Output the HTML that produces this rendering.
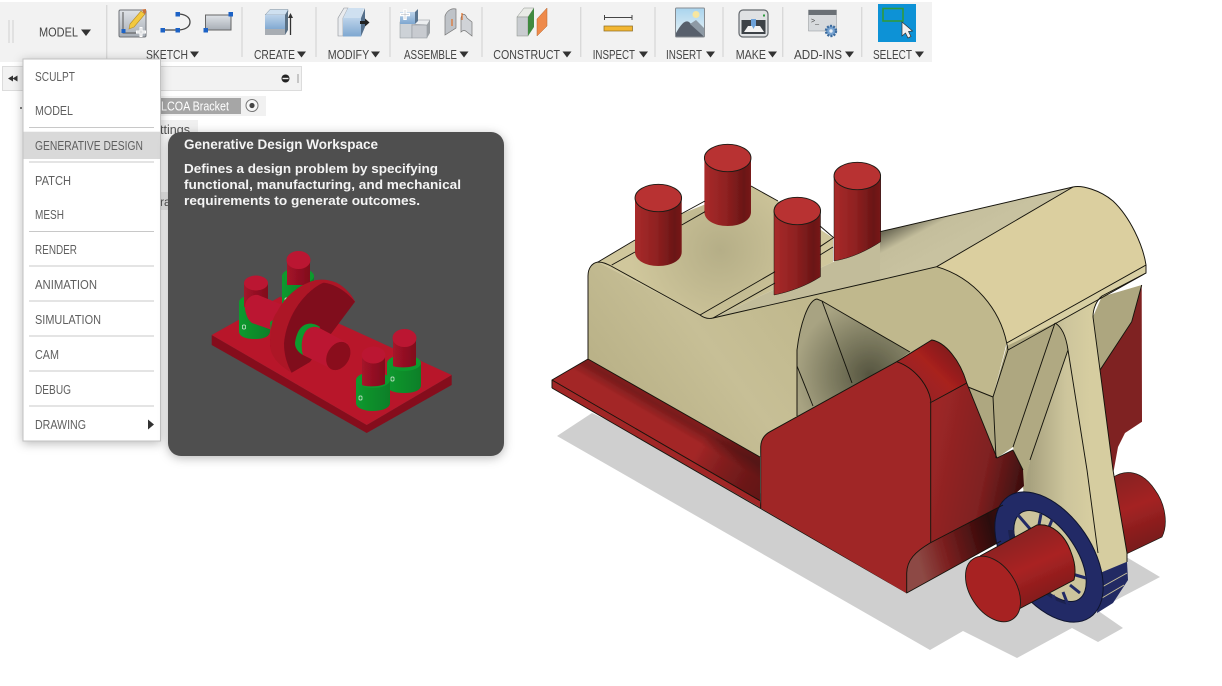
<!DOCTYPE html>
<html lang="en"><head><meta charset="utf-8"><title>Generative Design Workspace</title>
<style>
html,body{margin:0;padding:0;background:#fff;width:1222px;height:686px;overflow:hidden}
svg{display:block;font-family:"Liberation Sans",sans-serif}
.lb{font-size:13px;fill:#444}
.mi{font-size:13px;fill:#5f5f5f}
.e{fill:none;stroke:#14120c;stroke-width:.95}
</style></head><body>
<svg width="1222" height="686" viewBox="0 0 1222 686" xmlns="http://www.w3.org/2000/svg">
<defs>
<filter id="soft" x="-2%" y="-2%" width="104%" height="104%"><feGaussianBlur stdDeviation=".35"/></filter>
<filter id="sh" x="-20%" y="-10%" width="140%" height="120%"><feDropShadow dx="0" dy="2" stdDeviation="5" flood-color="#000" flood-opacity=".28"/></filter>
<linearGradient id="cyl" x1="0" x2="1" y1="0" y2="0"><stop offset="0" stop-color="#a82b2b"/><stop offset=".45" stop-color="#902121"/><stop offset=".85" stop-color="#6a1616"/><stop offset="1" stop-color="#781a1a"/></linearGradient>
<linearGradient id="flange" gradientUnits="userSpaceOnUse" x1="640" y1="431" x2="661" y2="395"><stop offset="0" stop-color="#a32627"/><stop offset=".45" stop-color="#a32626"/><stop offset=".75" stop-color="#781c1c"/><stop offset="1" stop-color="#8c2222"/></linearGradient>
<linearGradient id="flangeEnd" gradientUnits="userSpaceOnUse" x1="700" y1="445" x2="765" y2="482"><stop offset="0" stop-color="#000" stop-opacity="0"/><stop offset="1" stop-color="#3a0a0a" stop-opacity=".6"/></linearGradient>
<linearGradient id="front" gradientUnits="userSpaceOnUse" x1="640" y1="420" x2="800" y2="300"><stop offset="0" stop-color="#bab288"/><stop offset=".5" stop-color="#c7bf96"/><stop offset="1" stop-color="#c0b88d"/></linearGradient>
<linearGradient id="redb" gradientUnits="userSpaceOnUse" x1="930" y1="450" x2="1025" y2="470"><stop offset="0" stop-color="#9c2626"/><stop offset=".6" stop-color="#7f2020"/><stop offset="1" stop-color="#3d0f0f"/></linearGradient>
<linearGradient id="bevel" gradientUnits="userSpaceOnUse" x1="915" y1="550" x2="1005" y2="525"><stop offset="0" stop-color="#8d4a45"/><stop offset=".3" stop-color="#7c2020"/><stop offset=".85" stop-color="#2b0808"/><stop offset="1" stop-color="#3a0d0d"/></linearGradient>
<linearGradient id="topr" gradientUnits="userSpaceOnUse" x1="905" y1="400" x2="955" y2="350"><stop offset="0" stop-color="#8f2323"/><stop offset=".6" stop-color="#a8201f"/><stop offset="1" stop-color="#7f1c1c"/></linearGradient>
<linearGradient id="shaft" gradientUnits="userSpaceOnUse" x1="1035" y1="612" x2="1005" y2="545"><stop offset="0" stop-color="#7a1a1a"/><stop offset=".6" stop-color="#a92222"/><stop offset="1" stop-color="#8f2020"/></linearGradient>
<linearGradient id="rshaft" gradientUnits="userSpaceOnUse" x1="1140" y1="545" x2="1115" y2="480"><stop offset="0" stop-color="#7c1c1c"/><stop offset=".55" stop-color="#a42222"/><stop offset="1" stop-color="#8a2020"/></linearGradient>
<linearGradient id="wedge" gradientUnits="userSpaceOnUse" x1="885" y1="232" x2="905" y2="270"><stop offset="0" stop-color="#6f6c58"/><stop offset=".4" stop-color="#c4be9c"/><stop offset="1" stop-color="#c8c2a0"/></linearGradient>
<linearGradient id="arm" gradientUnits="userSpaceOnUse" x1="1030" y1="500" x2="1090" y2="500"><stop offset="0" stop-color="#a8a27f"/><stop offset=".6" stop-color="#cdc59c"/><stop offset="1" stop-color="#d6cda0"/></linearGradient>
<radialGradient id="rec" gradientUnits="userSpaceOnUse" cx="870" cy="375" r="75"><stop offset="0" stop-color="#55543f"/><stop offset=".5" stop-color="#7d7b60"/><stop offset="1" stop-color="#a8a382"/></radialGradient>
<radialGradient id="topf" gradientUnits="userSpaceOnUse" cx="720" cy="250" r="90"><stop offset="0" stop-color="#b5ae87"/><stop offset="1" stop-color="#d0c79c"/></radialGradient>
<linearGradient id="ws" x1="0" x2="0" y1="0" y2="1"><stop offset="0" stop-color="#dfe3e8"/><stop offset="1" stop-color="#a7adb5"/></linearGradient>
<linearGradient id="bl" x1="0" x2="0" y1="0" y2="1"><stop offset="0" stop-color="#bcd3ea"/><stop offset="1" stop-color="#7ea7d0"/></linearGradient>
<linearGradient id="sky" x1="0" x2="0" y1="0" y2="1"><stop offset="0" stop-color="#a9d4ee"/><stop offset="1" stop-color="#e9f3f6"/></linearGradient>
<linearGradient id="mrd" x1="0" x2="1" y1="0" y2="0"><stop offset="0" stop-color="#a5122a"/><stop offset="1" stop-color="#80101c"/></linearGradient>
<linearGradient id="mgr" x1="0" x2="1" y1="0" y2="0"><stop offset="0" stop-color="#0f9a2e"/><stop offset="1" stop-color="#0c7f28"/></linearGradient>
</defs>
<g filter="url(#soft)">

<!-- Model -->
<polygon fill="#cfcfcf" points="557,436 592,413 900,560 1128,558 1160,577 1097,610 1123,628 1098,642 1072,628 1017,658 963,631 930,650"/>
<!-- rear red -->
<path fill="#7f2222" d="M1141.7,285 L1142,421.7 L1125,433 L1118,447 L1112,480 L1095,360 L1131.7,321.7Z"/>
<path fill="url(#rshaft)" stroke="#1c1a14" stroke-width=".7" d="M1112,478 C1125,469 1142,470 1155,490 C1166,505 1168,525 1162,537 L1122,556Z"/>
<!-- flange -->
<polygon fill="url(#flange)" points="552,380 588,359 760,457 760,501"/>
<polygon fill="url(#flangeEnd)" points="552,380 588,359 760,457 760,501"/>
<polygon fill="#a12526" points="552,380 760,500.7 761,508 552,388"/>
<path class="e" d="M552,380 L760,500.7 M552,388 L552,380 L588,359 M552,388 L907,593"/>
<!-- back wedge & curved top -->
<polygon fill="#c2bc9a" points="713,318 833,262 880,242 885,280"/>
<polygon fill="url(#wedge)" points="880,231.7 1073,187 936.7,266.7 880,280"/>
<path fill="#dbcf9f" d="M1073,187 C1082,185 1100,190 1113,201 C1130,217 1143,245 1146,265 L1006.7,343 C1000,310 975,278 936.7,266.7Z"/>
<path fill="#d8cfa3" d="M1006.7,343 L1146,265 L1146,273 L1008,350Z"/>
<!-- lower right faces -->
<polygon fill="#ada67f" points="1101.7,296.7 1141.7,285 1131.7,321.7 1100,370 1093,316.7"/>
<polygon fill="#aea780" points="968,386.7 993,397 1006.7,346 1055,323 1013,447 997,458"/>
<polygon fill="#b0a982" points="1055,323 1066,330 1068,350 1030,460 1024,492 1013,447"/>
<!-- arm -->
<path fill="url(#arm)" d="M1055,323 L1146,273 L1102,296 C1097,300 1093,308 1093,317 L1113,470 L1127,553 L1127,562 L1100,573 L1023,492 L1030,460 L1068,350 C1066,336 1062,327 1055,323Z"/>
<!-- main front -->
<path fill="url(#front)" d="M588,359 L588,276 C588,268 592,263 598,262 L706,318 L713,318 L880,280 L936.7,266.7 C975,278 1000,310 1006.7,343 L993,397 L968,387 C962,365 948,342 931,340 L897,361 L770,432 C764,435 761,440 761,447 L760,457Z"/>
<!-- top -->
<path fill="url(#topf)" d="M598,262 L681,214 L751,186 L778,201 L833,238 L833,262 L713,318 L706,318Z"/>
<!-- recess -->
<path fill="url(#rec)" d="M797,416 L797,350 C800,325 808,300 817,299 L822,301 L910,352 L897,361 L797,418Z"/>
<!-- red front plate -->
<path fill="url(#topr)" stroke="#1c1a14" stroke-width=".5" d="M896.7,361.7 L931.7,340 C945,342 960,360 966.7,383 L930,403 C927,385 915,368 896.7,361.7Z"/>
<path fill="url(#redb)" d="M930.7,403 L967,383 L997,458 L1013,450 L1023,470 L1024,486 L1003,505 L930.7,543Z"/>
<path fill="#a02728" d="M760.7,508 L760.7,446.7 C761,440 764,435 770,431.7 L896.7,361.7 C915,368 928,385 930.7,400 L930.7,543 L906.7,593.3Z"/>
<path fill="url(#bevel)" d="M906.7,593 L906.7,573 C907,560 915,552 930,543 L1003,505 L1001,541 Z"/>
<!-- wheel tail -->
<polygon fill="#222a63" points="1100,573 1127,561.7 1128,580 1113,603 1097,613"/>
<path stroke="#c9c19a" stroke-width="1" fill="none" d="M1102,587 L1127,573 M1102,598 L1124,585"/>
<!-- wheel -->
<ellipse cx="1049" cy="557" rx="73" ry="43" transform="rotate(56 1049 557)" fill="#212a66" stroke="#10122e" stroke-width="1"/>
<ellipse cx="1050" cy="556" rx="52" ry="26" transform="rotate(56 1050 556)" fill="#ccc49c" stroke="#10122e" stroke-width="1"/>
<path fill="#1a2150" d="M1014,530 C1016,545 1025,570 1045,590 L1070,605 C1040,600 1012,565 1008,530Z"/>
<path stroke="#212a66" stroke-width="3" fill="none" d="M1018,515 L1031,530 M1041,514 L1038,530 M1052,520 L1047,532 M1072,574 L1086,578 M1070,585 L1080,593 M1063,592 L1068,605 M1053,595 L1056,608 M1040,594 L1043,606"/>
<!-- front shaft -->
<path fill="url(#shaft)" d="M980,556 L1037,525 C1052,523 1065,535 1071,552 C1076,565 1076,575 1074,580 L1017,610 L1005,600Z"/>
<path class="e" d="M980,556 L1037,525 C1052,523 1065,535 1071,552 C1075,562 1076,572 1074,580 M1017,610 L1074,580"/>
<ellipse cx="993" cy="589" rx="36" ry="23" transform="rotate(57 993 589)" fill="#a72324" stroke="#1c1a14" stroke-width=".9"/>
<!-- cylinders -->
<path fill="url(#cyl)" d="M635,198 V252 C635,260 645,266 658.3,266 C672,266 681.7,260 681.7,252 V198Z"/>
<ellipse cx="658.3" cy="198" rx="23.3" ry="13.7" fill="#b83030" stroke="#1c1a14" stroke-width=".9"/>
<path fill="url(#cyl)" d="M704.4,158 V212 C704.4,220 714,226 727.7,226 C741,226 751,220 751,212 V158Z"/>
<ellipse cx="727.7" cy="158" rx="23.3" ry="13.7" fill="#b83030" stroke="#1c1a14" stroke-width=".9"/>
<path fill="url(#cyl)" stroke="#1c1a14" stroke-width=".5" d="M774,211 V295 C790,292 808,285 820.5,276.7 V211Z"/>
<ellipse cx="797.3" cy="211" rx="23.3" ry="13.7" fill="#b83030" stroke="#1c1a14" stroke-width=".9"/>
<path fill="url(#cyl)" stroke="#1c1a14" stroke-width=".5" d="M834,176 V261 C852,258 868,250 880.7,241.7 V176Z"/>
<ellipse cx="857.3" cy="176" rx="23.3" ry="13.7" fill="#b83030" stroke="#1c1a14" stroke-width=".9"/>
<!-- edges -->
<path class="e" d="M588,359 L588,276 C588,268 592,263 598,262 C603,262 607,264 611,266 L700,315 C704,318 709,319 713,318 L880,280 L936.7,266.7 L1073,187"/>
<path class="e" d="M611.7,265 L635,252 M681.7,225 L705,211.7 M700,315 L775,271.7 M713,318 L775,283 M820,246.7 L833,238 M820,255 L833,247"/>
<path class="e" d="M598,262 L635,240 M681,214 L705,201 M751,186 L778,201 M820,226 L834,238"/>
<path class="e" d="M880,231.7 L1073,187 C1082,185 1100,190 1113,201 C1130,217 1143,245 1146,265 L1146,273 L1102,296 C1097,300 1093,308 1093,317 L1100,370 L1113,470 L1127,553 L1127,562"/>
<path class="e" d="M936.7,266.7 C975,278 1000,310 1006.7,343 L1146,265 M1008,350 L1146,273 M1006.7,343 L1008,350 L993,397 L996,458 M968,387 L993,397"/>
<path class="e" d="M1055,323 L1013,447 M1068,350 L1030,460 M1055,323 C1062,327 1066,336 1068,350 L1087,470 L1098,553 M1100,370 L1131.7,321.7 L1141.7,285"/>
<path class="e" d="M797,416 L797,350 C800,325 808,300 817,299 L822,301 L910,352 M822,301 L852,383 M797,366 L813,406"/>
<path class="e" d="M588,359 L760,457 M760.7,508 L760.7,446.7 C761,440 764,435 770,431.7 L896.7,361.7 C915,368 928,385 930.7,400 L930.7,543 M896.7,361.7 L931.7,340 C945,342 960,360 966.7,383 L930,403 M966.7,383 L997,458 L1013,450 L1023,470"/>
<path class="e" d="M906.7,593.3 L906.7,573 C907,560 915,552 930,543 M906.7,593 L1001,541 M930,543 L1003,505"/>

<!-- toolbar -->
<rect x="0" y="2" width="932" height="60" fill="#f2f2f2"/>
<g stroke="#d8d8d8" stroke-width="1.3"><path d="M9,20V43M13,20V43M106.7,5V60M242,7V57M316,7V57M390,7V57M482,7V57M580.7,7V57M655,7V57M723,7V57M782.7,7V57M861.7,7V57"/></g>
<text class="lb" x="39" y="36.500" textLength="39" lengthAdjust="spacingAndGlyphs">MODEL</text><polygon points="81,29.5 91,29.5 86,36" fill="#333"/>
<text class="lb" x="146" y="59" textLength="42" lengthAdjust="spacingAndGlyphs">SKETCH</text><polygon points="190,51.5 199,51.5 194.5,57.5" fill="#333"/>
<text class="lb" x="254" y="59" textLength="41" lengthAdjust="spacingAndGlyphs">CREATE</text><polygon points="297,51.5 306,51.5 301.5,57.5" fill="#333"/>
<text class="lb" x="327.7" y="59" textLength="41.5" lengthAdjust="spacingAndGlyphs">MODIFY</text><polygon points="371,51.5 380,51.5 375.5,57.5" fill="#333"/>
<text class="lb" x="404" y="59" textLength="53" lengthAdjust="spacingAndGlyphs">ASSEMBLE</text><polygon points="459.5,51.5 468.5,51.5 464,57.5" fill="#333"/>
<text class="lb" x="493.3" y="59" textLength="66.7" lengthAdjust="spacingAndGlyphs">CONSTRUCT</text><polygon points="562.5,51.5 571.5,51.5 567,57.5" fill="#333"/>
<text class="lb" x="592.7" y="59" textLength="42.3" lengthAdjust="spacingAndGlyphs">INSPECT</text><polygon points="639,51.5 648,51.5 643.5,57.5" fill="#333"/>
<text class="lb" x="666" y="59" textLength="36" lengthAdjust="spacingAndGlyphs">INSERT</text><polygon points="706,51.5 715,51.5 710.5,57.5" fill="#333"/>
<text class="lb" x="735.7" y="59" textLength="30.3" lengthAdjust="spacingAndGlyphs">MAKE</text><polygon points="768,51.5 777,51.5 772.5,57.5" fill="#333"/>
<text class="lb" x="794" y="59" textLength="48" lengthAdjust="spacingAndGlyphs">ADD-INS</text><polygon points="845,51.5 854,51.5 849.5,57.5" fill="#333"/>
<text class="lb" x="873" y="59" textLength="39" lengthAdjust="spacingAndGlyphs">SELECT</text><polygon points="915,51.5 924,51.5 919.5,57.5" fill="#333"/>

<!-- sketch icon -->
<rect x="119" y="10" width="27" height="27" rx="1.5" fill="url(#ws)" stroke="#6f7378"/>
<path d="M123,12V33H142" fill="none" stroke="#555" stroke-width="1"/>
<rect x="121.5" y="29" width="4" height="4" fill="#1f62c6"/>
<polygon points="130,24 141,11 145,14 134,27 129,29" fill="#f3c93f" stroke="#b58d2a" stroke-width=".6"/>
<polygon points="142,9.5 146,9 146,13 144,14" fill="#c9713a"/>
<path d="M141,27V37M136,32H146" stroke="#fff" stroke-width="3"/>
<path d="M141,28V36M137,32H145" stroke="#b8bcc0" stroke-width=".6"/>
<!-- spline icon -->
<path d="M163,30H177.5C185,30 190,27 190,22C190,17 185,14 177.5,14" fill="none" stroke="#444" stroke-width="1.3"/>
<rect x="160.5" y="28" width="4.5" height="4.5" fill="#1f62c6"/><rect x="175.5" y="28" width="4.5" height="4.5" fill="#1f62c6"/><rect x="175.5" y="12" width="4.5" height="4.5" fill="#1f62c6"/>
<!-- rect icon -->
<rect x="205.5" y="15" width="25.5" height="15" fill="url(#ws)" stroke="#666"/>
<rect x="203.5" y="28" width="4.5" height="4.5" fill="#1f62c6"/><rect x="228.5" y="12" width="4.5" height="4.5" fill="#1f62c6"/>
<!-- create icon -->
<polygon points="265,15 270,9.5 288,9.5 288,12 285,15" fill="#cfe0f0" stroke="#7a8a99" stroke-width=".5"/>
<rect x="265" y="15" width="20" height="15" fill="url(#bl)"/><rect x="265" y="29" width="20" height="6" fill="#a8adb3"/>
<polygon points="285,15 288,10 288,30 285,35" fill="#5a6f84"/>
<path d="M290.500,35V17" stroke="#333" stroke-width="1.3"/><polygon points="288,18 293,18 290.500,13" fill="#333"/>
<!-- modify icon -->
<polygon points="338,18 344,8 348,8 343,18 343,36 338,36" fill="#e9ebee" stroke="#8d9298" stroke-width=".6"/>
<polygon points="343,18 348,8 364,8 361,18" fill="#cfe0f0"/>
<rect x="343" y="18" width="18" height="18.500" fill="url(#bl)"/>
<polygon points="361,18 365,8 365,27 361,36.500" fill="#54708c"/>
<path d="M360,21h5v-2.500l4.500,4-4.500,4v-2.500h-5z" fill="#222"/>
<!-- assemble icon -->
<rect x="400" y="22" width="12" height="16" fill="#cdd2d7" stroke="#8b9096" stroke-width=".5"/><rect x="412" y="25" width="15" height="13" fill="#c8cbd0" stroke="#8b9096" stroke-width=".5"/>
<polygon points="412,24 416,20 430,20 427,25" fill="#eceef0" stroke="#8b9096" stroke-width=".5"/><polygon points="427,25 430,20 430,33 427,38" fill="#9ca1a6"/>
<rect x="400" y="12" width="15" height="12" fill="url(#bl)"/><polygon points="415,12 418,9 418,21 415,24" fill="#5a7590"/>
<path d="M405,9V20M400,14.500H410" stroke="#fff" stroke-width="3.500"/><path d="M405,10V19M401,14.500H409" stroke="#9aa0a6" stroke-width=".4"/>
<!-- joint icon -->
<path d="M445,35L445,16C447,10 452,8 456,9V28Z" fill="#bfc3c8" stroke="#777" stroke-width=".7"/>
<path d="M461,32V18C462,13 465,13 467,18L472,22V36L467,32C465,30 463,30 461,32Z" fill="#d0d3d7" stroke="#777" stroke-width=".7"/>
<path d="M452,19V26M462,13V20" stroke="#e0702a" stroke-width="1.200"/>
<!-- construct icon -->
<polygon points="517,17 524,8 534,8 528,17" fill="#e9ebe6" stroke="#8a8f8a" stroke-width=".5"/>
<rect x="517" y="17" width="11" height="19" fill="#c9ccd0" stroke="#8a8f8a" stroke-width=".5"/>
<polygon points="528,17 534,8 534,27 528,36" fill="#3f8a3f"/>
<polygon points="537,36 537,19 547,8 547,26" fill="#ee8a4c" stroke="#b6672f" stroke-width=".5"/>
<!-- inspect icon -->
<path d="M604.500,15V20M632,15V20M604.500,17.500H632" stroke="#444" stroke-width="1"/>
<rect x="604" y="26" width="28.500" height="5" fill="#f2b632" stroke="#8a6a20" stroke-width=".7"/>
<!-- insert icon -->
<rect x="675.500" y="8" width="29" height="29" rx="1" fill="url(#sky)" stroke="#878c91"/>
<circle cx="696" cy="14.500" r="3.500" fill="#f7e6a0"/>
<path d="M676,33C682,22 686,20 689,22L704,36.500H676Z" fill="#58616c"/>
<path d="M690,24L696,20L704,28V36.500Z" fill="#8e9aa5"/>
<!-- make icon -->
<rect x="739" y="10" width="29" height="27" rx="4" fill="#dfe1e3" stroke="#64686d" stroke-width="1.200"/>
<rect x="741.500" y="20" width="24" height="14" fill="#3e4246"/>
<polygon points="744,32 748,26 760,26 764,32" fill="#f3f3f3"/>
<rect x="751" y="19" width="5" height="7" fill="#6da2d9"/><polygon points="752,26 755,26 753.500,29" fill="#6da2d9"/>
<rect x="763" y="14.500" width="2" height="2" fill="#2c9a3e"/>
<!-- add-ins icon -->
<rect x="808.500" y="10" width="28" height="21" fill="#d7dadd" stroke="#8d9196" stroke-width=".5"/><rect x="808.500" y="10" width="28" height="5" fill="#6b7076"/>
<text x="811" y="23" font-size="7" fill="#444">&gt;_</text>
<circle cx="831" cy="31" r="5" fill="#78a4d2" stroke="#3e6c9e" stroke-width="2.400" stroke-dasharray="2 1.200"/><circle cx="831" cy="31" r="1.700" fill="#e8eef4"/>
<!-- select icon -->
<rect x="878" y="4" width="38" height="38" fill="#1192d6"/>
<rect x="883" y="8.500" width="20" height="12.500" fill="none" stroke="#2d9a3c" stroke-width="1.600"/>
<polygon points="902,22 902,36 905.500,33 908,38 911,36.500 908.500,31.500 912.500,31" fill="#f2f2f2" stroke="#333" stroke-width=".7"/>

<!-- second bar & browser -->
<rect x="2.500" y="66.500" width="299" height="24" fill="#f2f2f2" stroke="#dcdcdc"/>
<polygon points="13,75.500 13,81.500 8,78.500" fill="#333"/><polygon points="17.500,75.500 17.500,81.500 12.500,78.500" fill="#333"/>
<circle cx="285.500" cy="78.500" r="4" fill="#222"/><rect x="282.500" y="77.800" width="6" height="1.400" fill="#eee"/>
<path d="M298,74V83" stroke="#999" stroke-width="1"/>
<rect x="160" y="96" width="106" height="20" fill="#f1f1f1"/>
<rect x="160" y="98" width="81" height="16" fill="#a6a6a6"/>
<text x="161" y="110.500" font-size="13" fill="#fff" textLength="68" lengthAdjust="spacingAndGlyphs">LCOA Bracket</text>
<circle cx="252" cy="105.500" r="6" fill="#f7f7f7" stroke="#777"/><circle cx="252" cy="105.500" r="2.600" fill="#444"/>
<circle cx="21" cy="108" r="1" fill="#555"/>
<rect x="160" y="120" width="38" height="14" fill="#f0f0f0"/>
<text x="160" y="134" font-size="13" fill="#555" textLength="30" lengthAdjust="spacingAndGlyphs">ttings</text>
<rect x="160" y="192" width="10" height="18" fill="#eee"/><text x="160" y="206" font-size="12" fill="#555">ra</text>

<!-- menu -->
<rect x="23" y="59" width="137.500" height="382" fill="#fff" stroke="#c2c2c2" filter="url(#sh)"/>
<rect x="23.500" y="131.700" width="136.500" height="27.300" fill="#d9d9d9"/>
<g stroke="#c8c8c8" stroke-width="1"><path d="M29,127.500H154M29,162H154M29,231.500H154M29,266H154M29,301H154M29,336H154M29,371H154M29,406H154"/></g>
<text class="mi" x="35" y="81" textLength="40" lengthAdjust="spacingAndGlyphs">SCULPT</text>
<text class="mi" x="35" y="115" textLength="38" lengthAdjust="spacingAndGlyphs">MODEL</text>
<text class="mi" x="35" y="150" textLength="108" lengthAdjust="spacingAndGlyphs">GENERATIVE DESIGN</text>
<text class="mi" x="35" y="185" textLength="36" lengthAdjust="spacingAndGlyphs">PATCH</text>
<text class="mi" x="35" y="219" textLength="29" lengthAdjust="spacingAndGlyphs">MESH</text>
<text class="mi" x="35" y="254" textLength="42" lengthAdjust="spacingAndGlyphs">RENDER</text>
<text class="mi" x="35" y="289" textLength="62" lengthAdjust="spacingAndGlyphs">ANIMATION</text>
<text class="mi" x="35" y="324" textLength="66" lengthAdjust="spacingAndGlyphs">SIMULATION</text>
<text class="mi" x="35" y="359" textLength="24" lengthAdjust="spacingAndGlyphs">CAM</text>
<text class="mi" x="35" y="394" textLength="36" lengthAdjust="spacingAndGlyphs">DEBUG</text>
<text class="mi" x="35" y="429" textLength="51" lengthAdjust="spacingAndGlyphs">DRAWING</text>
<polygon points="148,419.500 148,429.500 154,424.500" fill="#333"/>

<!-- tooltip -->
<rect x="168" y="132" width="336" height="324" rx="13" fill="#4f4f4f" filter="url(#sh)"/>
<text x="184" y="149" font-size="13.500" font-weight="bold" fill="#f4f4f4" textLength="194" lengthAdjust="spacingAndGlyphs">Generative Design Workspace</text>
<g font-size="13" font-weight="bold" fill="#f4f4f4">
<text x="184" y="173" textLength="254" lengthAdjust="spacingAndGlyphs">Defines a design problem by specifying</text>
<text x="184" y="189" textLength="277" lengthAdjust="spacingAndGlyphs">functional, manufacturing, and mechanical</text>
<text x="184" y="205" textLength="236" lengthAdjust="spacingAndGlyphs">requirements to generate outcomes.</text>
</g>

<!-- mini model -->
<polygon fill="#85101d" points="211.700,335 366.700,425 451.700,375 451.700,385 366.700,433 211.700,345"/>
<polygon fill="#b8142a" points="211.700,335 280,296.700 451.700,375 366.700,425"/>
<path fill="url(#mgr)" d="M239,302V331C239,337 246,339 255,339C263,339 270,337 270,331V302Z"/><ellipse cx="254" cy="302" rx="15" ry="7" fill="#0f9a2e"/>
<path fill="url(#mgr)" d="M282,275V305C282,312 290,315 298,315C306,315 314,312 314,305V275Z"/><ellipse cx="298" cy="276" rx="16" ry="8" fill="#0f9a2e"/>
<path fill="url(#mrd)" d="M244,283V307H268V283Z"/><ellipse cx="256" cy="283" rx="12" ry="7.500" fill="#bb1530"/>
<path fill="url(#mrd)" d="M287,260V285H310V260Z"/><ellipse cx="298.500" cy="260" rx="12" ry="9" fill="#bb1530"/>
<path fill="url(#mgr)" d="M387,363V385C387,391 395,393 404,393C413,393 421,391 421,385V363Z"/><ellipse cx="404" cy="363" rx="17" ry="8" fill="#0f9a2e"/>
<path fill="url(#mrd)" d="M393,338V366C398,368 410,368 416,365V338Z"/><ellipse cx="404.500" cy="338" rx="12" ry="9" fill="#bb1530"/>
<path fill="url(#mgr)" d="M356,380V403C356,408 364,411 373,411C382,411 390,408 390,403V380Z"/><ellipse cx="373" cy="380" rx="17" ry="8" fill="#0f9a2e"/>
<path fill="url(#mrd)" d="M362,355V385C367,387 379,387 385,384V355Z"/><ellipse cx="373.500" cy="355" rx="12" ry="8.500" fill="#bb1530"/>
<g fill="none" stroke="#dfeee0" stroke-width=".7"><rect x="242.500" y="325" width="3" height="4" rx="1"/><rect x="285" y="298" width="3" height="4" rx="1"/><rect x="359" y="396" width="3" height="4" rx="1"/><rect x="391" y="377" width="3" height="4" rx="1"/></g>
<path fill="#bb1530" d="M245,309C244,300 251,294 258,295L283,305L272,330L252,323C248,320 246,315 245,309Z"/>
<path fill="#0f9a2e" d="M270,322 L276,318 L276,335 L271,332Z"/>
<path fill="#ad1228" d="M291.700,372.700 C278,365 270,355 270,345 C270,330 272,318 277,312 C283,300 295,288 306.700,283.300 C315,279 325,278 336.700,282.700 C345,287 352,295 355,301.700Z"/>
<path fill="#80101c" d="M355,301.700 C345,290 333,283.300 323.300,282.700 C306.700,290 286.700,313.300 284,343.300 C284,355 287.300,365 291.700,372.700 L310,362 L355,301.700Z"/>
<path fill="#0f9a2e" d="M295,343 C296,335 299,329 302,326.700 C306,323 313,322 320,327 L303,355 C298,352 295,348 295,343Z"/>
<path fill="#bb1530" d="M301.700,345 C302,338 304,333 306.700,330 C310,327 314,326 318,327.300 L348.300,343.300 L335,370.700 L303,355 C302,352 301.700,349 301.700,345Z"/>
<ellipse cx="338.300" cy="356" rx="11" ry="15" transform="rotate(30 338.300 356)" fill="#8a0f1d"/>
</g>
</svg>
</body></html>
